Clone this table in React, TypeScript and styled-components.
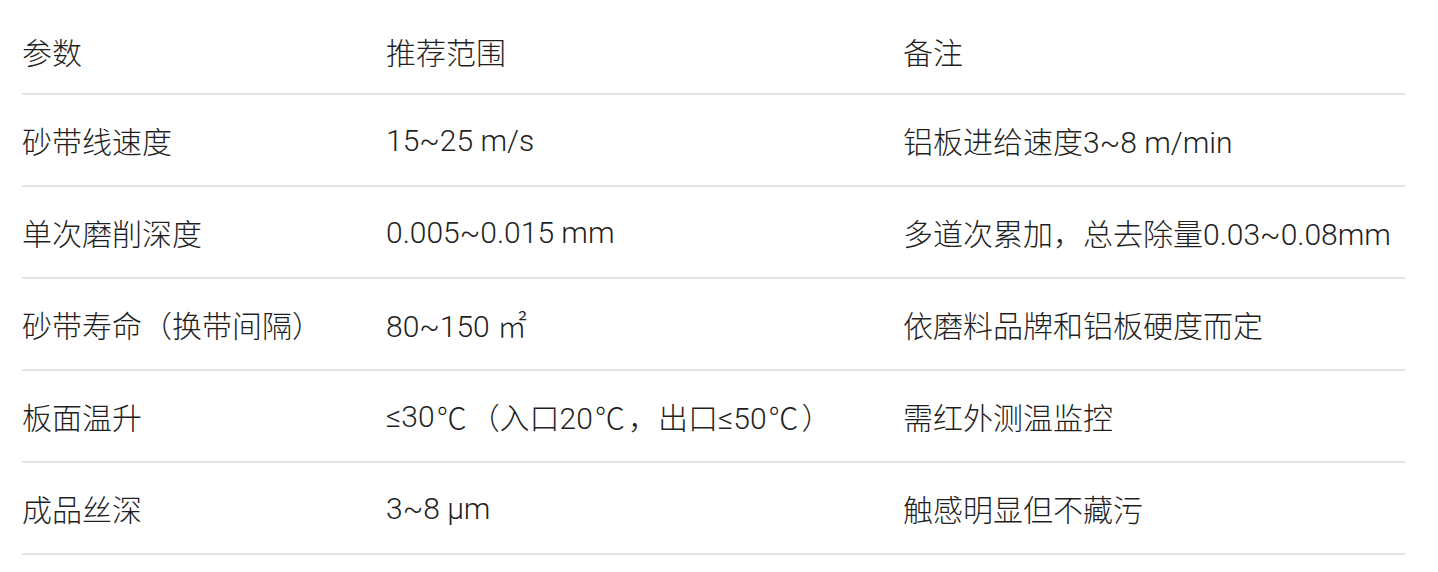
import styled, { createGlobalStyle } from 'styled-components';

const GlobalStyle = createGlobalStyle`
  * {
    box-sizing: border-box;
  }
  body {
    margin: 0;
    background: #ffffff;
    font-family: Roboto, "Noto Sans CJK SC", sans-serif;
    color: #1f1f1f;
  }
`;

const Page = styled.div`
  padding: 0 33px 0 22px;
`;

const Table = styled.div`
  display: grid;
  grid-template-columns: 364px 517px 1fr;
`;

const Row = styled.div`
  display: contents;
`;

const Cell = styled.div<{ $head?: boolean }>`
  height: ${(p) => (p.$head ? '95px' : '92px')};
  padding-top: ${(p) => (p.$head ? '9px' : '0')};
  display: flex;
  align-items: center;
  border-bottom: 2px solid #e3e3e3;
  font-size: 30px;
  font-weight: 300;
  white-space: nowrap;
`;

// degree sign drawn by the CJK face, full width like the reference
const Deg = styled.span`
  font-family: "Noto Sans CJK SC", sans-serif;
  margin: 0 3px 0 2px;
`;

const withDeg = (s: string) =>
  s.split('℃').flatMap((part, i) =>
    i === 0 ? [part] : [<Deg key={i}>℃</Deg>, part]
  );

const rows: [string, string, string][] = [
  ['砂带线速度', '15~25 m/s', '铝板进给速度3~8 m/min'],
  ['单次磨削深度', '0.005~0.015 mm', '多道次累加，总去除量0.03~0.08mm'],
  ['砂带寿命（换带间隔）', '80~150 ㎡', '依磨料品牌和铝板硬度而定'],
  ['板面温升', '≤30℃（入口20℃，出口≤50℃）', '需红外测温监控'],
  ['成品丝深', '3~8 μm', '触感明显但不藏污'],
];

export default function App() {
  return (
    <>
      <GlobalStyle />
      <Page>
        <Table>
          <Row>
            <Cell $head>参数</Cell>
            <Cell $head>推荐范围</Cell>
            <Cell $head>备注</Cell>
          </Row>
          {rows.map((r) => (
            <Row key={r[0]}>
              <Cell>{r[0]}</Cell>
              <Cell>{withDeg(r[1])}</Cell>
              <Cell>{r[2]}</Cell>
            </Row>
          ))}
        </Table>
      </Page>
    </>
  );
}
